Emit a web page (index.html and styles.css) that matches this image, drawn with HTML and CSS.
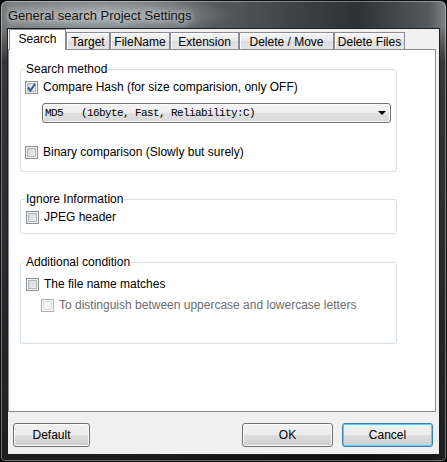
FILE: index.html
```html
<!DOCTYPE html>
<html lang="en">
<head>
    <meta charset="UTF-8">
    <title>General search Project Settings</title>
    <link rel="stylesheet" href="styles.css">
</head>
<body>
    <div class="window">
        <div class="titlebar">
            <span class="title">General search Project Settings</span>
        </div>

        <div class="client">
            <!-- Tabs -->
            <div class="tabs">
                <div class="tab active" style="width: 57px">Search</div>
                <div class="tab" style="width: 44px">Target</div>
                <div class="tab" style="width: 60px">FileName</div>
                <div class="tab" style="width: 69px">Extension</div>
                <div class="tab" style="width: 95px">Delete / Move</div>
                <div class="tab" style="width: 71px">Delete Files</div>
            </div>

            <div class="panel">
                <fieldset class="group group-search">
                    <legend>Search method</legend>
                    <label class="row row-hash">
                        <span class="cb checked">
                            <svg width="11" height="11" viewBox="0 0 11 11"><polyline points="2,5.5 4.5,8.5 9,2" fill="none" stroke="#3b579d" stroke-width="2"/></svg>
                        </span>
                        Compare Hash (for size comparision, only OFF)
                    </label>
                    <div class="select">
                        <span class="select-text">MD5   (16byte, Fast, Reliability:C)</span>
                        <span class="arrow"></span>
                    </div>
                    <label class="row row-binary">
                        <span class="cb"></span>
                        Binary comparison (Slowly but surely)
                    </label>
                </fieldset>

                <fieldset class="group group-ignore">
                    <legend>Ignore Information</legend>
                    <label class="row row-jpeg">
                        <span class="cb"></span>
                        JPEG header
                    </label>
                </fieldset>

                <fieldset class="group group-additional">
                    <legend>Additional condition</legend>
                    <label class="row row-name">
                        <span class="cb"></span>
                        The file name matches
                    </label>
                    <label class="row row-case disabled">
                        <span class="cb"></span>
                        To distinguish between uppercase and lowercase letters
                    </label>
                </fieldset>
            </div>

            <!-- Buttons -->
            <div class="buttons">
                <button class="btn btn-default">Default</button>
                <button class="btn btn-ok">OK</button>
                <button class="btn btn-cancel">Cancel</button>
            </div>
        </div>
    </div>
</body>
</html>
```

FILE: styles.css
```css
/* Window */
body {
    margin: 0;
    background-color: #000;
    font-family: "Liberation Sans", Arial, sans-serif;
    font-size: 12px;
    color: #000;
}

.window {
    width: 447px;
    height: 462px;
    box-sizing: border-box;
    border: 1px solid #111;
    border-radius: 7px 7px 5px 5px;
    background:
        linear-gradient(to bottom, rgba(0, 0, 0, 0) 0, rgba(0, 0, 0, 0) 26px, rgba(0, 0, 0, 0.55) 60px, rgba(0, 0, 0, 0.75) 100%),
        linear-gradient(to right, #74787a 0%, #676b6e 35%, #45484b 62%, #2f3234 80%, #55595c 96%, #7c8082 100%);
    box-shadow: inset 0 0 0 1px rgba(255, 255, 255, 0.35);
    padding: 0 6px 6px;
    display: flex;
    flex-direction: column;
}

.titlebar {
    height: 27px;
    display: flex;
    align-items: center;
    padding-left: 1px;
    background: radial-gradient(ellipse 130px 22px at 95px 14px, rgba(225, 228, 229, 0.55), rgba(225, 228, 229, 0));
}

.title {
    font-size: 13px;
    color: #111;
    padding-top: 1px;
    text-shadow: 0 0 5px #d8dadb, 0 0 10px #c4c7c8, 0 0 16px #a9adaf;
}

.client {
    flex: 1;
    border: 1px solid #1e1e1e;
    background-color: #f0f0f0;
    display: flex;
    flex-direction: column;
}

/* Tabs */
.tabs {
    height: 20px;
    display: flex;
    align-items: flex-end;
    padding-left: 1px;
}

.tab {
    box-sizing: border-box;
    height: 17px;
    padding-top: 1px;
    border: 1px solid #898c95;
    border-bottom: none;
    background: linear-gradient(#f5f5f5, #e9e9e9 50%, #dedede 51%, #e4e4e4);
    box-shadow: inset 1px 1px 0 #fff;
    display: flex;
    align-items: center;
    justify-content: center;
}

.tab.active {
    height: 21px;
    margin-bottom: -1px;
    background: #fff;
    box-shadow: none;
    position: relative;
    z-index: 1;
    padding-top: 0;
    padding-bottom: 2px;
}

.panel {
    height: 363px;
    box-sizing: border-box;
    margin-right: 3px;
    border: 1px solid #898c95;
    background-color: #fff;
    padding: 12px 0 0 11px;
}

/* Group boxes */
.group {
    width: 377px;
    box-sizing: border-box;
    margin: 0;
    border: 1px solid #d5dfe5;
    border-radius: 3px;
    padding: 0 4px;
}

.group legend {
    padding: 0 1px;
    line-height: 14px;
}

.group-search {
    padding-bottom: 11px;
}

.group-ignore {
    margin-top: 20px;
    padding-bottom: 8px;
}

.group-additional {
    margin-top: 21px;
    padding-bottom: 30px;
}

.row {
    height: 16px;
    display: flex;
    align-items: center;
    gap: 5px;
}

.row-hash {
    margin-top: 3px;
}

.row-binary {
    margin-top: 21px;
}

.row-jpeg {
    margin-top: 3px;
    padding-left: 1px;
}

.row-name {
    margin-top: 7px;
    padding-left: 1px;
}

.row-case {
    margin-top: 5px;
    padding-left: 16px;
}

/* Checkboxes */
.cb {
    width: 13px;
    height: 13px;
    box-sizing: border-box;
    flex-shrink: 0;
    border: 1px solid #8e8f8f;
    background: linear-gradient(135deg, #cdd0d3, #f6f6f6);
    box-shadow: inset 0 0 0 1px #f4f4f4, inset 0 0 0 2px #b2b6bb;
    display: flex;
    align-items: center;
    justify-content: center;
}

.disabled {
    color: #6d6d6d;
}

.disabled .cb {
    border-color: #b1b1b1;
    background: #f4f4f4;
    box-shadow: inset 0 0 0 1px #fff, inset 0 0 0 2px #dedede;
}

/* Combobox */
.select {
    height: 20px;
    box-sizing: border-box;
    width: 349px;
    margin: 8px 0 0 17px;
    border: 1px solid #707070;
    border-radius: 3px;
    background: linear-gradient(#f4f4f4, #ededed 50%, #e1e1e1 51%, #d9d9d9);
    box-shadow: inset 0 0 0 1px #fafafa;
    display: flex;
    align-items: center;
    padding-left: 2px;
}

.select-text {
    font-family: "Liberation Mono", "Courier New", monospace;
    font-size: 11px;
    letter-spacing: -0.6px;
    white-space: pre;
}

.arrow {
    margin-left: auto;
    margin-right: 4px;
    width: 0;
    height: 0;
    border-left: 4px solid transparent;
    border-right: 4px solid transparent;
    border-top: 4px solid #000;
}

/* Buttons */
.buttons {
    flex: 1;
    display: flex;
    align-items: flex-start;
    padding: 11px 6px 0 5px;
}

.btn {
    height: 24px;
    width: 91px;
    font-family: "Liberation Sans", Arial, sans-serif;
    font-size: 12px;
    color: #000;
    border: 1px solid #707070;
    border-radius: 3px;
    background: linear-gradient(#f2f2f2, #ebebeb 50%, #dddddd 51%, #cfcfcf);
    box-shadow: inset 0 0 0 1px #fbfbfb;
    padding: 0;
}

.btn-default {
    width: 77px;
}

.btn-ok {
    margin-left: auto;
}

.btn-cancel {
    margin-left: 9px;
    border-color: #3c7fb1;
    box-shadow: inset 0 0 0 1px #48d7fb;
}
```
